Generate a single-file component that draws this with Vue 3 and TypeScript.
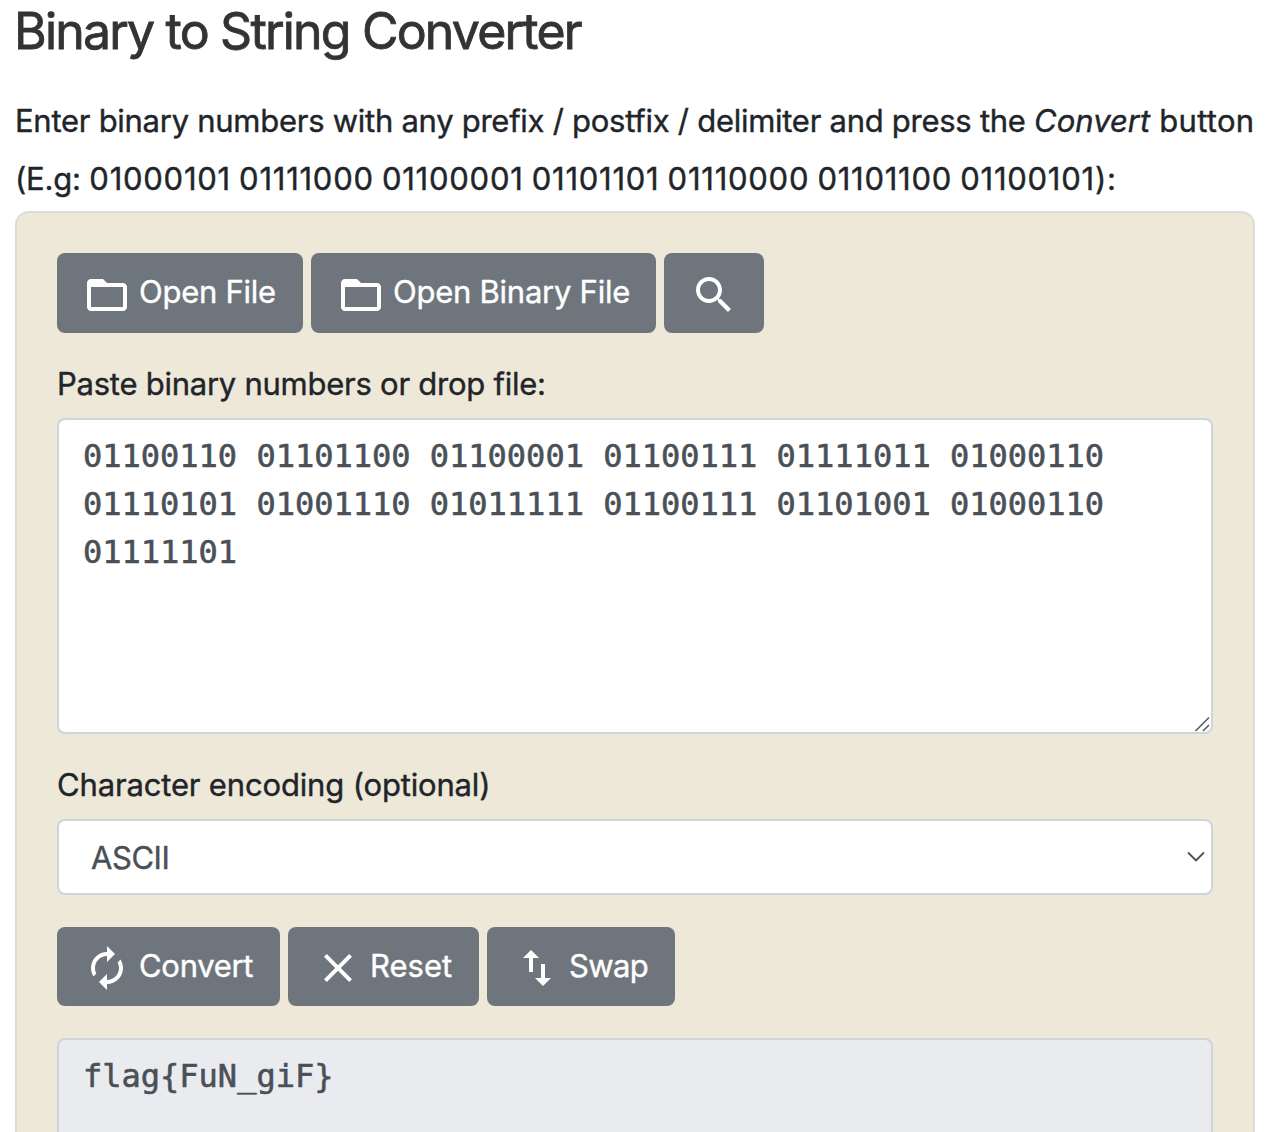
<script setup lang="ts">
import { ref } from 'vue'

const source = ref(
  '01100110 01101100 01100001 01100111 01111011 01000110 01110101 01001110 01011111 01100111 01101001 01000110 01111101',
)
const output = ref('flag{FuN_giF}')
const encoding = ref('ASCII')

interface Action {
  name: string
  label: string
  icon: string
}

const folder =
  'M20 6h-8l-2-2H4c-1.1 0-1.99.9-1.99 2L2 18c0 1.1.9 2 2 2h16c1.1 0 2-.9 2-2V8c0-1.1-.9-2-2-2zm0 12H4V8h16v10z'

const fileActions: Action[] = [
  { name: 'open', label: 'Open File', icon: folder },
  { name: 'open-binary', label: 'Open Binary File', icon: folder },
  {
    name: 'search',
    label: '',
    icon: 'M15.5 14h-.79l-.28-.27C15.41 12.59 16 11.11 16 9.5 16 5.91 13.09 3 9.5 3S3 5.91 3 9.5 5.91 16 9.5 16c1.61 0 3.09-.59 4.23-1.57l.27.28v.79l5 4.99L20.49 19l-4.99-5zm-6 0C7.01 14 5 11.99 5 9.5S7.01 5 9.5 5 14 7.01 14 9.5 11.99 14 9.5 14z',
  },
]

const convertActions: Action[] = [
  {
    name: 'convert',
    label: 'Convert',
    icon: 'M12 6v3l4-4-4-4v3c-4.42 0-8 3.58-8 8 0 1.57.46 3.03 1.24 4.26L6.7 14.8c-.45-.83-.7-1.79-.7-2.8 0-3.31 2.69-6 6-6zm6.76 1.74L17.3 9.2c.44.84.7 1.79.7 2.8 0 3.31-2.69 6-6 6v-3l-4 4 4 4v-3c4.42 0 8-3.58 8-8 0-1.57-.46-3.03-1.24-4.26z',
  },
  {
    name: 'reset',
    label: 'Reset',
    icon: 'M19 6.41L17.59 5 12 10.59 6.41 5 5 6.41 10.59 12 5 17.59 6.41 19 12 13.41 17.59 19 19 17.59 13.41 12z',
  },
  {
    name: 'swap',
    label: 'Swap',
    icon: 'M16 17.01V10h-2v7.01h-3L15 21l4-3.99h-3zM9 3L5 6.99h3V14h2V6.99h3L9 3z',
  },
]
</script>

<template>
  <main class="page">
    <h1>Binary to String Converter</h1>
    <p class="intro">
      <span class="lead">Enter binary numbers with any prefix / postfix / delimiter and press the </span><i>Convert</i><span class="tail"> button</span><br />
      <span class="eg">(E.g: </span><span class="bits">01000101 01111000 01100001 01101101 01110000 01101100 01100101):</span>
    </p>

    <form class="card" @submit.prevent>
      <div class="row">
        <button v-for="a in fileActions" :key="a.name" type="button" :class="['btn', a.name]">
          <svg viewBox="0 0 24 24"><path :d="a.icon" /></svg>
          <span v-if="a.label">{{ a.label }}</span>
        </button>
      </div>

      <label class="paste" for="source">Paste binary numbers or drop file:</label>
      <div class="field">
        <textarea id="source" v-model="source" class="control mono source" spellcheck="false"></textarea>
        <svg class="grip" viewBox="0 0 16 16"><path d="M1.5 15L15 1.5M9 15L15 9" /></svg>
      </div>

      <label class="charset" for="encoding">Character encoding (optional)</label>
      <div class="field">
        <select id="encoding" v-model="encoding" class="control select">
          <option>ASCII</option>
        </select>
        <svg class="chevron" viewBox="0 0 18 12"><path d="M1 1.5L9 9.5L17 1.5" /></svg>
      </div>

      <div class="row actions">
        <button v-for="a in convertActions" :key="a.name" type="button" :class="['btn', a.name]">
          <svg viewBox="0 0 24 24"><path :d="a.icon" /></svg>
          <span>{{ a.label }}</span>
        </button>
      </div>

      <textarea v-model="output" class="control mono output" readonly spellcheck="false"></textarea>
    </form>
  </main>
</template>

<style>
body {
  margin: 0;
  background: #fff;
}
</style>

<style scoped>
* {
  box-sizing: border-box;
}
.page {
  height: 1132px;
  overflow: hidden;
  padding: 1px 15px 0;
  font-family: Inter, sans-serif;
  font-size: 31px;
  color: #212529;
  -webkit-text-stroke: 0.4px;
}
h1 {
  margin: 0 0 31px -1px;
  font-size: 50px;
  font-weight: 400;
  line-height: 60px;
  letter-spacing: -1.8px;
  color: #333;
  -webkit-text-stroke: 0.8px;
}
.intro {
  margin: 0 -15px 3px 0;
  line-height: 58px;
  white-space: nowrap;
}
.lead {
  letter-spacing: -0.27px;
}
.tail {
  letter-spacing: 0.3px;
}
.eg {
  letter-spacing: -0.2px;
}
.bits {
  letter-spacing: 0.75px;
  word-spacing: -1.3px;
}
.card {
  height: 1100px;
  padding: 40px;
  border: 2px solid #dbdbdb;
  border-radius: 14px;
  background: #eee8d9;
}
.row {
  display: flex;
  gap: 8px;
}
.btn {
  display: flex;
  align-items: center;
  height: 80px;
  padding: 0 26px;
  border: 0;
  border-radius: 8px;
  background: #6e757d;
  color: #fff;
  font: 400 31px/48px Inter, sans-serif;
  letter-spacing: -0.25px;
  white-space: nowrap;
}
.btn svg {
  flex: none;
  width: 48px;
  height: 48px;
  margin-top: 4px;
  fill: currentColor;
}
.btn span {
  margin: -3px 0 0 8px;
}
.btn.open {
  width: 246px;
}
.btn.open-binary {
  width: 345px;
}
.btn.search {
  width: 100px;
}
.actions {
  margin: 32px 0;
}
.actions .btn {
  height: 79px;
}
.actions .btn svg {
  margin-top: 3px;
}
.actions .btn span {
  margin-top: -2px;
}
.btn.convert {
  width: 223px;
  letter-spacing: -0.3px;
}
.btn.reset {
  width: 191px;
  letter-spacing: 0;
}
.btn.swap {
  width: 188px;
  letter-spacing: -0.6px;
}
label {
  display: block;
  margin: 27px 0 10px;
  line-height: 48px;
}
.paste {
  letter-spacing: -0.25px;
}
.charset {
  letter-spacing: -0.16px;
}
.field {
  position: relative;
}
.control {
  display: block;
  width: 100%;
  margin: 0;
  border: 2px solid #ced4da;
  border-radius: 8px;
  outline: 0;
  background: #fff;
  color: #495057;
  -webkit-text-stroke: 0.4px;
}
.mono {
  padding: 12px 24px;
  font: 32px/48px 'DejaVu Sans Mono', monospace;
  resize: none;
  overflow: hidden;
  -webkit-text-stroke: 0.6px;
}
.source {
  height: 316px;
}
.select {
  height: 76px;
  padding: 0 32px;
  appearance: none;
  font: 31px Inter, sans-serif;
  letter-spacing: -0.45px;
}
.output {
  height: 316px;
  background: #eaebef;
}
.grip,
.chevron {
  position: absolute;
  fill: none;
  pointer-events: none;
}
.grip {
  right: 3px;
  bottom: 2px;
  width: 16px;
  height: 16px;
  stroke: #555;
  stroke-width: 1.5;
}
.chevron {
  right: 8px;
  top: 32px;
  width: 18px;
  height: 12px;
  stroke: #495057;
  stroke-width: 1.8;
}
</style>
